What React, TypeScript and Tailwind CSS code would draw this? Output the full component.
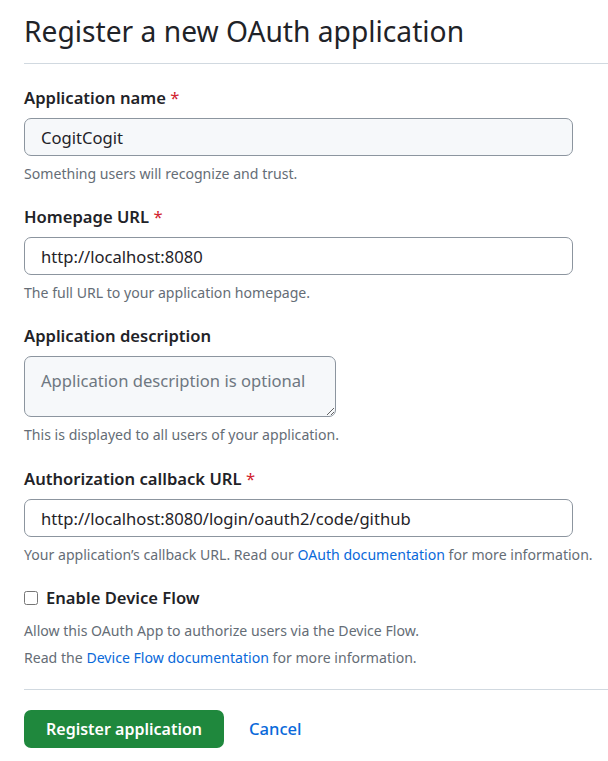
import React from "react";

const font = { fontFamily: '"Noto Sans", "Segoe UI", sans-serif' };

function Label({ children, required }: { children: React.ReactNode; required?: boolean }) {
  return (
    <div className="text-[16.6px] leading-[24px] font-semibold text-[#1f2328]">
      {children}
      {required && <span className="text-[#d1242f] font-normal"> *</span>}
    </div>
  );
}

function Hint({ children }: { children: React.ReactNode }) {
  return <div className="text-[14.1px] leading-[20px] text-[#656d76]">{children}</div>;
}

function TextInput({ value, filled }: { value: string; filled?: boolean }) {
  return (
    <input
      readOnly
      value={value}
      className={`w-[549px] h-[38px] mt-[8px] mb-[8px] rounded-[7px] border border-[#8c959f] px-[16px] text-[16.6px] text-[#1f2328] outline-none ${
        filled ? "bg-[#f6f8fa]" : "bg-white"
      }`}
      style={font}
    />
  );
}

export default function App() {
  return (
    <div className="bg-white min-h-[761px] w-[608px] pl-[24px]" style={font}>
      <div className="pt-[10px] pb-[10px] border-b border-[#d1d9e0]">
        <h2 className="text-[28.2px] leading-[43px] font-normal text-[#1f2328]">Register a new OAuth application</h2>
      </div>

      <div className="pt-[22px]">
        <Label required>Application name</Label>
        <TextInput value="CogitCogit" filled />
        <Hint>Something users will recognize and trust.</Hint>
      </div>

      <div className="pt-[21px]">
        <Label required>Homepage URL</Label>
        <TextInput value="http://localhost:8080" />
        <Hint>The full URL to your application homepage.</Hint>
      </div>

      <div className="pt-[21px]">
        <Label>Application description</Label>
        <textarea
          placeholder="Application description is optional"
          className="block w-[312px] h-[61px] mt-[8px] mb-[8px] rounded-[7px] border border-[#8c959f] bg-[#f6f8fa] px-[16px] py-[12px] text-[16.6px] leading-[24px] text-[#1f2328] placeholder:text-[#6e7781] outline-none"
          style={font}
        />
        <Hint>This is displayed to all users of your application.</Hint>
      </div>

      <div className="pt-[22px]">
        <Label required>Authorization callback URL</Label>
        <TextInput value="http://localhost:8080/login/oauth2/code/github" />
        <Hint>
          Your application’s callback URL. Read our{" "}
          <a className="text-[#0969da]">OAuth documentation</a> for more information.
        </Hint>
      </div>

      <div className="pt-[21px] flex items-center gap-[8px]">
        <input type="checkbox" className="w-[14px] h-[14px] m-0" />
        <span className="text-[16.6px] leading-[24px] font-semibold text-[#1f2328]">Enable Device Flow</span>
      </div>
      <div className="pt-[7px] text-[14.1px] leading-[27px] text-[#656d76]">
        <div>Allow this OAuth App to authorize users via the Device Flow.</div>
        <div>
          Read the <a className="text-[#0969da]">Device Flow documentation</a> for more information.
        </div>
      </div>

      <div className="mt-[18px] border-t border-[#d1d9e0]" />

      <div className="pt-[20px] flex items-center">
        <button
          className="h-[38px] w-[200px] rounded-[7px] bg-[#1f883d] text-white text-[16px] font-semibold"
          style={font}
        >
          Register application
        </button>
        <a className="ml-[25px] text-[16.6px] font-medium text-[#0969da]">Cancel</a>
      </div>
    </div>
  );
}
